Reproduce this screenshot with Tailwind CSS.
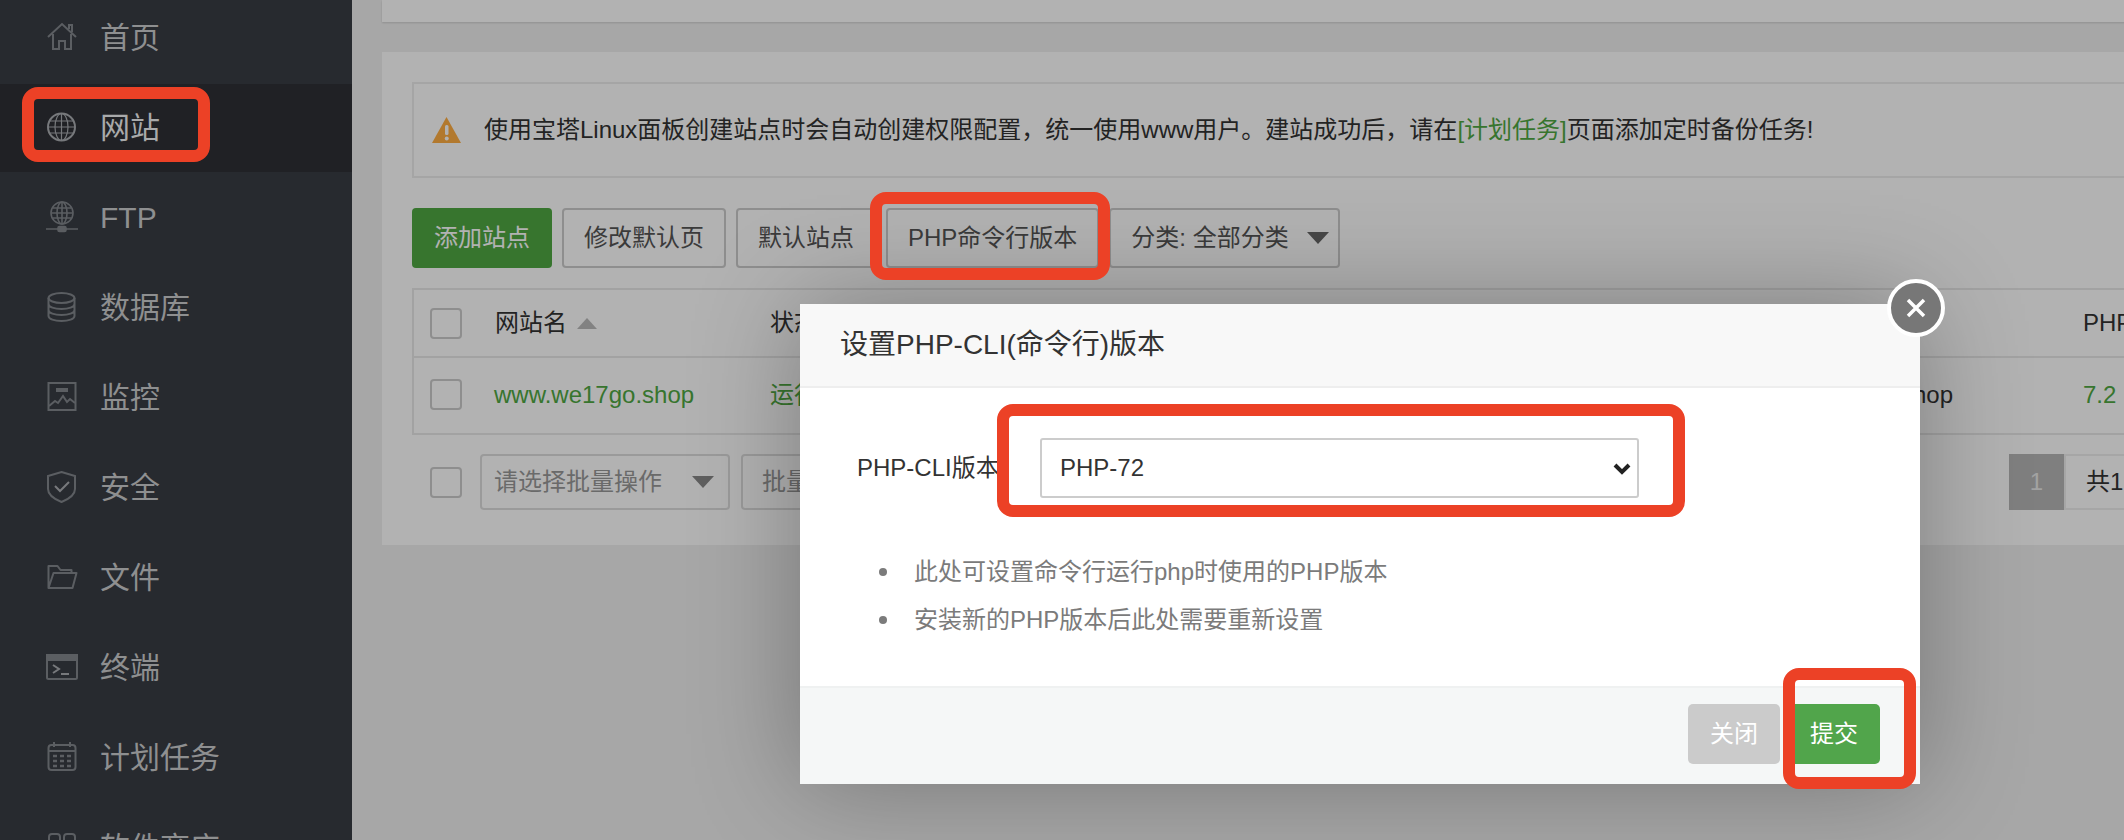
<!DOCTYPE html>
<html lang="zh-CN">
<head>
    <meta charset="UTF-8">
    <title>网站 - 宝塔面板</title>
    <script src="https://cdn.jsdelivr.net/npm/@tailwindcss/browser@4"></script>
</head>
<body class="bg-[#f0f0f0]">
<div class="relative flex h-[840px] w-[2124px] overflow-hidden font-['Liberation_Sans','Noto_Sans_CJK_SC',sans-serif] text-[24px] text-[#333]">

    <!-- sidebar -->
    <aside class="w-[352px] shrink-0 bg-[#272a2f] text-[30px] text-[#8e8f90]">
        <ul class="-mt-[6px]">
            <li class="flex h-[90px] items-center pb-[4px] pl-[46px]">
                <svg class="mr-[22px] h-[32px] w-[32px] text-[#5b5e62]" viewBox="0 0 32 32" fill="none" stroke="currentColor" stroke-width="2"><path d="M2 16 16 3l14 13M23 8V4h3v7M7 13v15h6v-8h6v8h6V13"/></svg>
                <span>首页</span>
            </li>
            <li class="mb-[2px] flex h-[88px] items-center bg-[#202125] pb-[2px] pl-[46px] text-[#a9aaab]">
                <svg class="mr-[22px] h-[32px] w-[32px] text-[#77797c]" viewBox="0 0 32 32" fill="none" stroke="currentColor" stroke-width="1.200"><circle cx="15.500" cy="16" r="13.500" stroke-width="2"/><ellipse cx="15.500" cy="16" rx="6.500" ry="13.500"/><path d="M15.500 2.500v27M2 16h27M4 10h23M4 22h23"/></svg>
                <span>网站</span>
            </li>
            <li class="flex h-[90px] items-center pb-[4px] pl-[46px]">
                <svg class="mr-[22px] h-[32px] w-[32px] text-[#5b5e62]" viewBox="0 0 32 32" fill="none" stroke="currentColor" stroke-width="1.600"><circle cx="16" cy="12" r="11"/><ellipse cx="16" cy="12" rx="5" ry="11"/><path d="M16 1v22M5 12h22M6.500 7h19M6.500 17h19M0 28h32" /><rect x="12" y="25.500" width="8" height="5" rx="1.500" fill="currentColor"/></svg>
                <span>FTP</span>
            </li>
            <li class="flex h-[90px] items-center pb-[4px] pl-[46px]">
                <svg class="mr-[22px] h-[32px] w-[32px] text-[#5b5e62]" viewBox="0 0 32 32" fill="none" stroke="currentColor" stroke-width="2"><ellipse cx="15.500" cy="7" rx="13" ry="5"/><path d="M2.500 7v18c0 3 6 5 13 5s13-2 13-5V7M2.500 13c0 3 6 5 13 5s13-2 13-5M2.500 19c0 3 6 5 13 5s13-2 13-5"/></svg>
                <span>数据库</span>
            </li>
            <li class="flex h-[90px] items-center pb-[4px] pl-[46px]">
                <svg class="mr-[22px] h-[32px] w-[32px] text-[#5b5e62]" viewBox="0 0 32 32" fill="none" stroke="currentColor" stroke-width="2"><rect x="2.500" y="2" width="27" height="27"/><path d="M3 25l6-5 3 2 5-7 4 6 3-3 5 4"/><rect x="10" y="7" width="12" height="4" fill="currentColor" stroke="none"/></svg>
                <span>监控</span>
            </li>
            <li class="flex h-[90px] items-center pb-[4px] pl-[46px]">
                <svg class="mr-[22px] h-[32px] w-[32px] text-[#5b5e62]" viewBox="0 0 32 32" fill="none" stroke="currentColor" stroke-width="2"><path d="M15.500 1 29 5v13c0 6-6 10-13.500 13C8 28 2 24 2 18V5z"/><path d="M9 15l5 5 9-9" stroke="#77797c"/></svg>
                <span>安全</span>
            </li>
            <li class="flex h-[90px] items-center pb-[4px] pl-[46px]">
                <svg class="mr-[22px] h-[32px] w-[32px] text-[#5b5e62]" viewBox="0 0 32 32" fill="none" stroke="currentColor" stroke-width="2"><path d="M2.500 27V5h9l3 4h11v3M2.500 27l5-15h23l-4 15z" stroke-linejoin="round"/></svg>
                <span>文件</span>
            </li>
            <li class="flex h-[90px] items-center pb-[4px] pl-[46px]">
                <svg class="mr-[22px] h-[32px] w-[32px] text-[#5b5e62]" viewBox="0 0 32 32" fill="none" stroke="currentColor" stroke-width="2"><rect x="1" y="4" width="30" height="24" rx="1.500"/><path d="M1 4h30v5H1z" fill="currentColor"/><path d="M7 14l6 4-6 4M15 23h8" stroke="#77797c"/></svg>
                <span>终端</span>
            </li>
            <li class="flex h-[90px] items-center pb-[4px] pl-[46px]">
                <svg class="mr-[22px] h-[32px] w-[32px] text-[#5b5e62]" viewBox="0 0 32 32" fill="none" stroke="currentColor" stroke-width="2"><rect x="2.500" y="4" width="27" height="25" rx="3"/><path d="M2.500 10h27M8 1v5M24 1v5"/><path d="M7 15h4M14 15h4M21 15h4M7 20h4M14 20h4M21 20h4M7 25h4M14 25h4M21 25h4" stroke-width="2.500"/></svg>
                <span>计划任务</span>
            </li>
            <li class="flex h-[90px] items-center pb-[4px] pl-[46px]">
                <svg class="mr-[22px] h-[32px] w-[32px] text-[#5b5e62]" viewBox="0 0 32 32" fill="none" stroke="currentColor" stroke-width="2"><rect x="3" y="3" width="11" height="11" rx="3"/><rect x="18" y="3" width="11" height="11" rx="3"/><rect x="3" y="18" width="11" height="11" rx="3"/><rect x="18" y="18" width="11" height="11" rx="3"/></svg>
                <span>软件商店</span>
            </li>
        </ul>
    </aside>

    <!-- main content -->
    <main class="w-[1800px] shrink-0 pl-[30px]">
        <div class="h-[22px] bg-white shadow-[0_1px_2px_rgba(0,0,0,0.15)]"></div>

        <section class="mt-[30px] h-[493px] bg-white pl-[30px] pt-[30px]">
            <div class="flex h-[96px] items-center border-2 border-[#ececec] pl-[18px]">
                <svg class="mr-[23px] h-[26px] w-[29px]" viewBox="0 0 29 26"><path d="M14.500 0 29 26H0z" fill="#ffae42"/><rect x="13" y="8" width="3.500" height="10" rx="1.500" fill="#fff"/><circle cx="14.750" cy="21.500" r="2" fill="#fff"/></svg>
                <p>使用宝塔Linux面板创建站点时会自动创建权限配置，统一使用www用户。建站成功后，请在<a class="text-[#4fa843]">[计划任务]</a>页面添加定时备份任务!</p>
            </div>

            <div class="mt-[30px] flex gap-[10px] text-[#555]">
                <button class="h-[60px] rounded-[4px] bg-[#4fa843] px-[22px] text-white">添加站点</button>
                <button class="h-[60px] rounded-[4px] border-2 border-[#ccc] px-[20px]">修改默认页</button>
                <button class="h-[60px] rounded-[4px] border-2 border-[#ccc] px-[20px]">默认站点</button>
                <button class="h-[60px] rounded-[4px] border-2 border-[#ccc] px-[20px]">PHP命令行版本</button>
                <div class="flex h-[60px] w-[231px] items-center rounded-[4px] border-2 border-[#ccc] pl-[20px]">
                    <span>分类: 全部分类</span>
                    <span class="ml-[18px] h-0 w-0 border-x-[11px] border-t-[12px] border-x-transparent border-t-[#666]"></span>
                </div>
            </div>

            <div class="mt-[20px] h-[147px] w-[1800px] border-2 border-[#e8e8e8]">
                <div class="flex h-[68px] items-center border-b-2 border-[#e8e8e8]">
                    <span class="ml-[16px] h-[31px] w-[32px] rounded-[4px] border-2 border-[#ccc]"></span>
                    <span class="ml-[33px] flex w-[275px] items-center">网站名<span class="ml-[10px] h-0 w-0 border-x-[10px] border-b-[11px] border-x-transparent border-b-[#bbb]"></span></span>
                    <span>状态</span>
                    <span class="ml-[1265px]">PHP</span>
                </div>
                <div class="flex h-[73px] items-center">
                    <span class="ml-[16px] h-[31px] w-[32px] rounded-[4px] border-2 border-[#ccc]"></span>
                    <a class="ml-[32px] w-[276px] text-[#4fa843]">www.we17go.shop</a>
                    <span class="w-[200px] text-[#4fa843]">运行中</span>
                    <span class="w-[983px] text-right">/www/wwwroot/www.we17go.shop</span>
                    <span class="ml-[130px] text-[#4fa843]">7.2</span>
                </div>
            </div>

            <div class="mt-[19px] flex h-[56px] w-[1800px] items-center text-[#999]">
                <span class="ml-[18px] h-[31px] w-[32px] rounded-[4px] border-2 border-[#ccc]"></span>
                <div class="ml-[18px] flex h-[56px] w-[250px] items-center rounded-[4px] border-2 border-[#ddd] pl-[12px]">
                    <span>请选择批量操作</span>
                    <span class="ml-[30px] h-0 w-0 border-x-[11px] border-t-[12px] border-x-transparent border-t-[#888]"></span>
                </div>
                <button class="ml-[11px] h-[56px] w-[138px] rounded-[4px] border-2 border-[#ddd]">批量操作</button>
                <span class="ml-[1130px] flex h-[56px] w-[55px] items-center justify-center bg-[#b7b7b7] text-white/70">1</span>
                <span class="flex h-[56px] items-center border-2 border-[#eee] pl-[20px] text-[#333] whitespace-nowrap">共1页 1条</span>
            </div>
        </section>
    </main>

    <!-- dim layer over the page, the sidebar stays above it -->
    <div class="absolute bottom-0 left-[352px] right-0 top-0 bg-black/30"></div>

    <!-- dialog -->
    <div class="absolute left-[800px] top-[304px] flex h-[480px] w-[1120px] flex-col bg-white shadow-[0_0_100px_rgba(0,0,0,0.3)]">
        <div class="flex h-[84px] shrink-0 items-center border-b-2 border-[#eee] bg-[#f8f8f8] pl-[40px] text-[28px]">设置PHP-CLI(命令行)版本</div>
        <div class="flex-1">
            <div class="mt-[50px] flex items-center">
                <label class="ml-[57px] w-[183px]">PHP-CLI版本</label>
                <div class="relative w-[599px]">
                    <select class="h-[60px] w-full appearance-none rounded-[3px] border-2 border-[#ccc] bg-white pl-[18px] text-[#333]">
                        <option>PHP-72</option>
                    </select>
                    <svg class="absolute right-[8px] top-[25px] h-[12px] w-[18px]" viewBox="0 0 18 12" fill="none" stroke="#222" stroke-width="4"><path d="M2 2l7 7 7-7"/></svg>
                </div>
            </div>
            <ul class="mt-[50px] text-[#7b7b7b]">
                <li class="flex h-[48px] items-center pl-[79px]"><span class="mr-[27px] h-[8px] w-[8px] rounded-full bg-[#7b7b7b]"></span>此处可设置命令行运行php时使用的PHP版本</li>
                <li class="flex h-[48px] items-center pl-[79px]"><span class="mr-[27px] h-[8px] w-[8px] rounded-full bg-[#7b7b7b]"></span>安装新的PHP版本后此处需要重新设置</li>
            </ul>
        </div>
        <div class="flex h-[98px] shrink-0 items-start justify-end gap-[8px] border-t-2 border-[#eff1f1] bg-[#f5f7f7] pr-[40px] pt-[16px] text-white">
            <button class="h-[60px] w-[92px] rounded-[5px] bg-[#cbcbcb]">关闭</button>
            <button class="h-[60px] w-[92px] rounded-[5px] bg-[#51a54b]">提交</button>
        </div>
        <button class="absolute -right-[25px] -top-[25px] flex h-[58px] w-[58px] items-center justify-center rounded-full border-[4px] border-white bg-[#777]">
            <svg class="h-[22px] w-[22px]" viewBox="0 0 22 22" fill="none" stroke="#fff" stroke-width="3.500"><path d="M3 3l16 16M19 3 3 19"/></svg>
        </button>
    </div>

    <!-- red annotation frames -->
    <div class="absolute left-[22px] top-[87px] h-[75px] w-[188px] rounded-[16px] border-[12px] border-[#ec4126]"></div>
    <div class="absolute left-[870px] top-[192px] h-[88px] w-[240px] rounded-[16px] border-[12px] border-[#ec4126]"></div>
    <div class="absolute left-[997px] top-[404px] h-[113px] w-[688px] rounded-[16px] border-[12px] border-[#ec4126]"></div>
    <div class="absolute left-[1783px] top-[668px] h-[121px] w-[133px] rounded-[16px] border-[12px] border-[#ec4126]"></div>
</div>
</body>
</html>
